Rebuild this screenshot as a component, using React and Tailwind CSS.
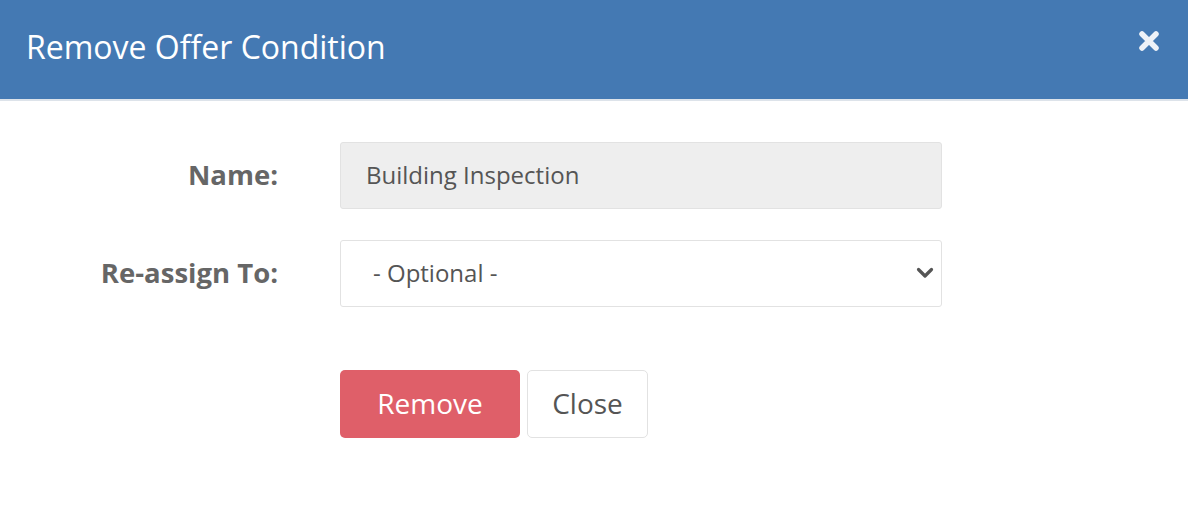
import { useState } from 'react'

export default function App() {
  const [assignTo, setAssignTo] = useState('')

  return (
    <div className="w-[1188px] h-[520px] bg-white font-['Open_Sans',sans-serif] overflow-hidden">
      <div className="h-[101px] bg-[#4479b3] border-b-2 border-[#dde3ea] flex items-center justify-between pl-[26px] pr-[28px]">
        <h1 className="text-[32px] text-white leading-none -mt-[6px]">Remove Offer Condition</h1>
        <button className="text-[#eef2f8] -mt-[18px]" aria-label="Close">
          <svg width="22" height="22" viewBox="0 0 22 22">
            <path d="M4 4 L18 18 M18 4 L4 18" stroke="currentColor" strokeWidth="5.5" strokeLinecap="round" />
          </svg>
        </button>
      </div>

      <div className="pt-[41px] flex flex-col gap-[31px]">
        <div className="flex items-center">
          <label className="w-[278px] text-right text-[27.5px] font-bold text-[#666] pb-[2px]">Name:</label>
          <div className="ml-[62px] w-[602px] h-[67px] bg-[#eee] border border-[#e2e2e2] rounded-[3px] flex items-center px-[25px] pb-[2px] text-[24px] text-[#555]">
            Building Inspection
          </div>
        </div>
        <div className="flex items-center">
          <label className="w-[278px] text-right text-[27.5px] font-bold text-[#666] pb-[2px]">Re-assign To:</label>
          <div className="ml-[62px] w-[602px] h-[67px] relative">
            <select
              value={assignTo}
              onChange={(e) => setAssignTo(e.target.value)}
              className="appearance-none w-full h-full bg-white border border-[#e2e2e2] rounded-[3px] pl-[32px] pb-[2px] text-[24px] text-[#555] outline-none"
            >
              <option value="">- Optional -</option>
            </select>
            <svg className="absolute right-[8px] top-[26px] text-[#555] pointer-events-none" width="18" height="14" viewBox="0 0 18 14">
              <path d="M2.5 3.5 L9 10 L15.5 3.5" stroke="currentColor" strokeWidth="3.2" fill="none" strokeLinecap="round" strokeLinejoin="round" />
            </svg>
          </div>
        </div>
        <div className="flex ml-[340px] gap-[7px] mt-[32px]">
          <button className="w-[180px] h-[68px] bg-[#df5f69] text-white rounded-[5px] text-[28px] pb-[2px]">Remove</button>
          <button className="w-[121px] h-[68px] bg-white border border-[#e2e2e2] text-[#555] rounded-[5px] text-[28px] pb-[2px]">Close</button>
        </div>
      </div>
    </div>
  )
}
